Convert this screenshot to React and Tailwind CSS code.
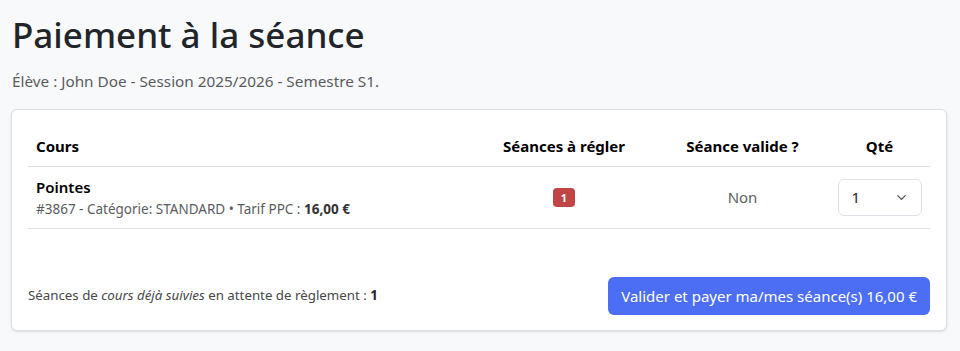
import { ChevronDown } from "lucide-react";

export default function App() {
  return (
    <div className="min-h-[351px] bg-[#f8f9fa] px-3 pt-[12px] text-[#212529] font-['Noto_Sans',sans-serif]">
      <h1 className="text-[35px] leading-[46px] font-medium text-[#212529]">Paiement à la séance</h1>
      <p className="mt-[13px] text-[15.3px] leading-[21px] text-[#595c5f]">
        Élève : John Doe - Session 2025/2026 - Semestre S1.
      </p>

      <div className="mt-[17px] w-[936px] -ml-px rounded-md border border-[#dcdfe3] bg-white pl-4 pr-[16px] pt-[16px] pb-[15px] shadow-sm">
        <div className="grid grid-cols-[444px_184px_173px_101px] text-[15px]">
          <div className="flex h-[41px] items-center border-b border-[#dee2e6] px-2 font-bold text-black">Cours</div>
          <div className="flex h-[41px] items-center justify-center border-b border-[#dee2e6] font-bold text-black">Séances à régler</div>
          <div className="flex h-[41px] items-center justify-center border-b border-[#dee2e6] font-bold text-black">Séance valide ?</div>
          <div className="flex h-[41px] items-center justify-center border-b border-[#dee2e6] font-bold text-black">Qté</div>

          <div className="flex h-[62px] flex-col justify-center border-b border-[#dee2e6] px-2">
            <div className="text-[15px] leading-[20px] font-semibold text-black">Pointes</div>
            <div className="mt-[3px] text-[13.5px] leading-[18px] text-[#595c5f]">
              #3867 - Catégorie: STANDARD • Tarif PPC : <span className="font-bold text-[#333]">16,00 €</span>
            </div>
          </div>
          <div className="flex h-[62px] items-center justify-center border-b border-[#dee2e6]">
            <span className="rounded-[4px] bg-[#c04646] px-[8px] py-[2px] text-[11px] leading-[15px] font-bold text-white">1</span>
          </div>
          <div className="flex h-[62px] items-center justify-center border-b border-[#dee2e6] text-[15px] text-[#5c5f62]">Non</div>
          <div className="flex h-[62px] items-center justify-center border-b border-[#dee2e6]">
            <div className="flex h-[37px] w-[84px] items-center justify-between rounded-md border border-[#dee2e6] pl-[13px] pr-[12px] text-[15px] text-[#212529]">
              <span>1</span>
              <ChevronDown size={15} strokeWidth={2} className="text-[#495057]" />
            </div>
          </div>
        </div>

        <div className="mt-[48px] flex items-center justify-between">
          <p className="text-[13.3px] text-[#45484b]">
            Séances de <em>cours déjà suivies</em> en attente de règlement : <span className="font-bold text-[#212529]">1</span>
          </p>
          <button className="h-[38px] rounded-md bg-[#4c6ef5] px-[13px] text-[15px] text-white">
            Valider et payer ma/mes séance(s) 16,00 €
          </button>
        </div>
      </div>
    </div>
  );
}
